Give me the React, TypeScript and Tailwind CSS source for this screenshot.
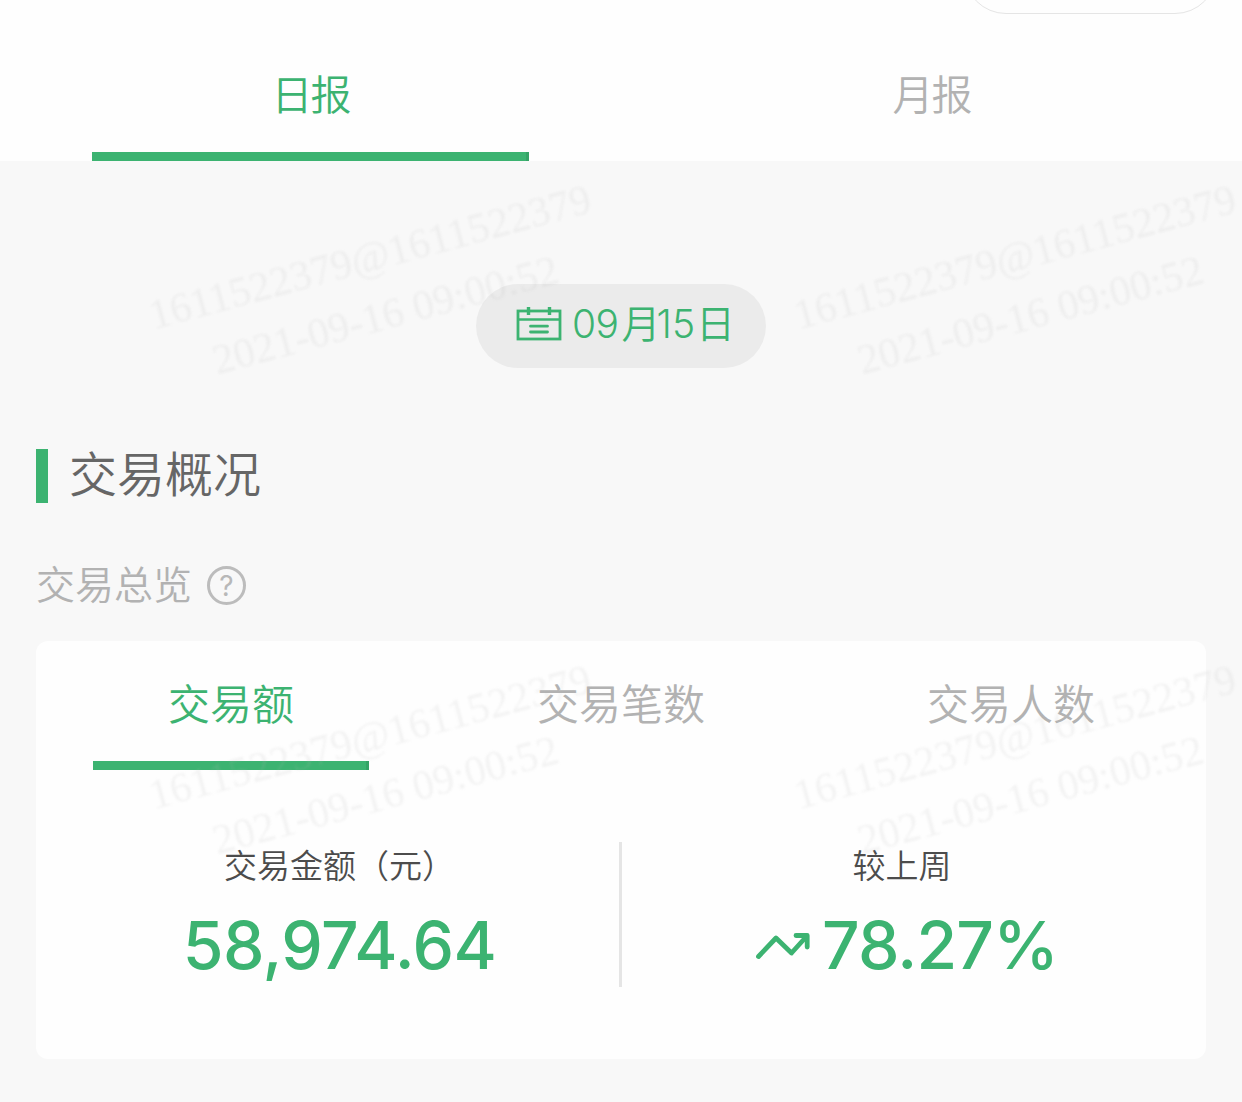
import { useState } from 'react'

const reportTabs = ['日报', '月报']

const metricTabs = ['交易额', '交易笔数', '交易人数']

function CalendarIcon() {
  return (
    <svg className="mb-[6px]" width="46" height="36" viewBox="0 0 46 36" fill="none" stroke="#3cb371">
      <rect x="2" y="6" width="42" height="28" strokeWidth="2.8" />
      <path d="M2 14.5H44" strokeWidth="2.6" />
      <path d="M12.5 2V10M33.5 2V10" strokeWidth="3.4" />
      <path d="M14.5 21.2H31.5M14.5 27H31.5" strokeWidth="2.8" strokeLinecap="round" />
    </svg>
  )
}

function TrendIcon() {
  return (
    <svg className="mt-[2px]" width="54" height="28" viewBox="0 0 54 28" fill="none" stroke="#3cb371" strokeWidth="4.8" strokeLinecap="round" strokeLinejoin="round">
      <path d="M2.5 24.5L20 6L35.5 21L50 5" />
      <path d="M40 3.5H51.2V15" />
    </svg>
  )
}

function Watermark() {
  return (
    <div className="absolute inset-0 overflow-hidden pointer-events-none pl-[55px] pt-[46px]">
      <div className="grid w-[1290px] grid-cols-[645px_645px] grid-rows-[480px_480px]">
        {[0, 1, 2, 3].map(i => (
          <div key={i} className="flex items-center justify-center">
            <div className="-rotate-15 whitespace-nowrap text-center font-['Liberation_Serif',serif] text-[42px] leading-[60px] text-[#b4b4b4]/[0.15] blur-[0.8px]">
              <p>1611522379@1611522379</p>
              <p>2021-09-16 09:00:52</p>
            </div>
          </div>
        ))}
      </div>
    </div>
  )
}

export default function App() {
  const [report, setReport] = useState(0)
  const [metric, setMetric] = useState(0)

  return (
    <div className="relative h-[1102px] w-[1242px] overflow-hidden bg-[#f8f8f8] font-['Inter','Noto_Sans_CJK_SC',sans-serif] font-[350]">
      <header className="relative h-[161px] bg-[#fefefe]">
        <div className="absolute -top-[70px] left-[964px] h-[84px] w-[253px] rounded-full border border-[#e5e5e5]" />
        <div className="flex h-full">
          {reportTabs.map((name, i) => (
            <button
              key={name}
              onClick={() => setReport(i)}
              className={`flex w-[621px] flex-col items-center justify-between pt-[66px] text-[41px] leading-[58px] tracking-[-2px] ${report === i ? 'text-[#3cb371]' : 'text-[#b2b2b2]'}`}
            >
              <span>{name}</span>
              {report === i && <span className="h-[9px] w-[437px] border-r-[3px] border-[#35a367] bg-[#3cb371]" />}
            </button>
          ))}
        </div>
      </header>

      <div className="mt-[123px] flex justify-center">
        <button className="flex h-[84px] w-[290px] items-center rounded-full bg-[#ebebeb] pl-[40px] text-[#3cb371]">
          <CalendarIcon />
          <span className="mb-[3px] ml-[10px] flex items-baseline whitespace-nowrap text-[39px] font-light">
            <span className="tracking-[-0.5px]">09</span>
            <span className="ml-[3px] w-[35px] font-[350]">月</span>
            <span>15</span>
            <span className="ml-[1px] font-[350]">日</span>
          </span>
        </button>
      </div>

      <main className="px-9">
        <div className="mt-[81px] flex h-[54px] items-center">
          <span className="h-[54px] w-3 bg-[#3cb371]" />
          <h1 className="mb-[3px] ml-[21px] text-[48px] leading-[54px] text-[#666]">交易概况</h1>
        </div>

        <div className="mt-[54px] flex h-[56px] items-center">
          <h2 className="text-[39px] leading-[56px] text-[#b2b2b2]">交易总览</h2>
          <span className="ml-[15px] flex h-[39px] w-[39px] items-center justify-center rounded-full border-[3px] border-[#bcbcbc] pt-[2px] text-[28px] font-normal text-[#b8b8b8]">?</span>
        </div>

        <section className="mt-[28px] h-[418px] rounded-xl bg-[#fefefe]">
          <div className="flex">
            {metricTabs.map((name, i) => (
              <button
                key={name}
                onClick={() => setMetric(i)}
                className={`flex h-[129px] w-[390px] flex-col items-center justify-between pt-[34px] text-[42px] leading-[60px] ${metric === i ? 'text-[#3cb371]' : 'text-[#b2b2b2]'}`}
              >
                <span>{name}</span>
                {metric === i && <span className="h-[9px] w-[276px] border-r-[3px] border-[#35a367] bg-[#3cb371]" />}
              </button>
            ))}
          </div>

          <div className="mt-[72px] flex h-[145px]">
            <div className="flex w-[583px] flex-col items-center pl-6">
              <p className="text-[33px] leading-[48px] text-[#4c4c4c]">交易金额（元）</p>
              <p className="mt-[15px] text-[66px] font-medium leading-[80px] tracking-[-0.6px] text-[#3cb371]">58,974.64</p>
            </div>
            <div className="w-[3px] bg-[#e5e5e5]" />
            <div className="flex flex-1 flex-col items-center pr-6">
              <p className="text-[33px] leading-[48px] text-[#4c4c4c]">较上周</p>
              <div className="mt-[15px] flex items-center pl-[10px] text-[#3cb371]">
                <TrendIcon />
                <span className="ml-[12px] text-[66px] font-medium leading-[80px] tracking-[-0.8px]">78.27%</span>
              </div>
            </div>
          </div>
        </section>
      </main>

      <Watermark />
    </div>
  )
}
